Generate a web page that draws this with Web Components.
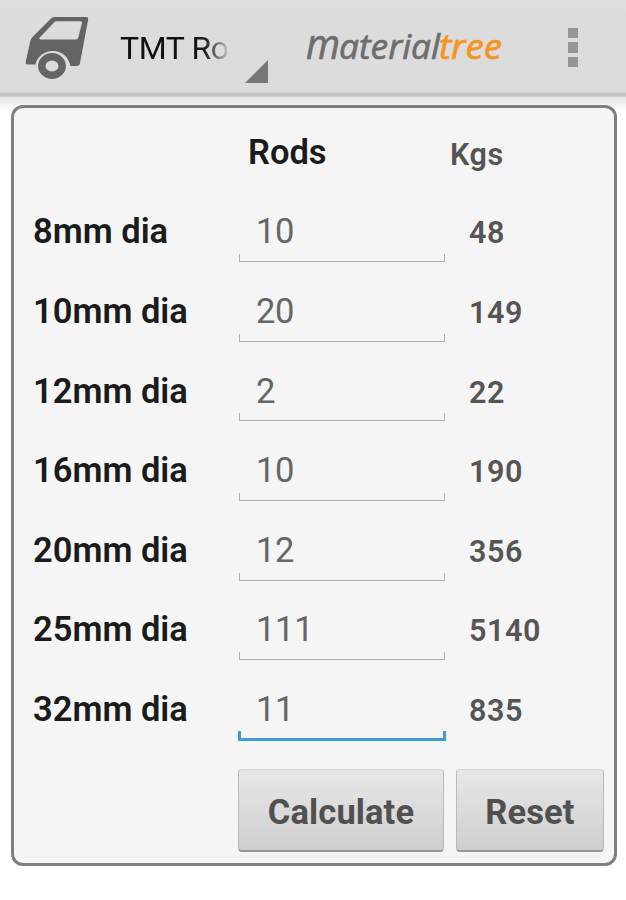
<!DOCTYPE html>
<html lang="en">
<head>
<meta charset="utf-8">
<title>TMT Rods</title>
<style>
    body {
        margin: 0;
        background: #fff;
        font-family: Roboto, sans-serif;
    }
</style>
</head>
<body>
<rod-app>
    <action-bar slot="bar">
        <truck-icon slot="icon"></truck-icon>
        <bar-spinner slot="title">TMT Ro</bar-spinner>
        <brand-logo slot="brand"></brand-logo>
    </action-bar>
    <rod-card></rod-card>
</rod-app>

<script>
const rods = [
    { size: '8mm dia', count: '10', weight: '48' },
    { size: '10mm dia', count: '20', weight: '149' },
    { size: '12mm dia', count: '2', weight: '22' },
    { size: '16mm dia', count: '10', weight: '190' },
    { size: '20mm dia', count: '12', weight: '356' },
    { size: '25mm dia', count: '111', weight: '5140' },
    { size: '32mm dia', count: '11', weight: '835', active: true }
]

/** Base element, renders its static template into an open shadow root */
class BaseElement extends HTMLElement {
    connectedCallback() {
        if (this.shadowRoot) return
        this.attachShadow({ mode: 'open' }).innerHTML = this.template()
    }
}

class RodApp extends BaseElement {
    template() {
        return `
        <style>
            :host {
                display: flex;
                flex-direction: column;
                height: 900px;
                overflow: hidden;
            }
            main {
                padding: 8px 9px 0 11px;
                background: linear-gradient(#e4e4e4, #fff 14px);
            }
        </style>
        <slot name="bar"></slot>
        <main><slot></slot></main>
        `
    }
}

class ActionBar extends BaseElement {
    template() {
        return `
        <style>
            :host {
                display: flex;
                align-items: center;
                box-sizing: border-box;
                height: 97px;
                padding: 0 48px 3px 24px;
                background: linear-gradient(#e1e1e1, #dcdcdc 12px, #dcdcdc 91px, #bdbdbd 95px, #d8d8d8);
            }
            .brand { margin-left: 37px; }
            .menu {
                display: grid;
                gap: 4px;
                margin: 1px 0 0 auto;
            }
            .menu i {
                width: 10.5px;
                height: 10.5px;
                background: #969696;
            }
        </style>
        <slot name="icon"></slot>
        <slot name="title"></slot>
        <div class="brand"><slot name="brand"></slot></div>
        <div class="menu"><i></i><i></i><i></i></div>
        `
    }
}

class TruckIcon extends BaseElement {
    template() {
        return `
        <style>
            :host { display: block; width: 66px; height: 66px; }
            svg { display: block; }
        </style>
        <svg width="66" height="66" viewBox="24 14.5 66 66">
            <path fill="#646464" fill-rule="evenodd" d="M54 17.5H86.5Q88.6 17.5 88.2 20L80 63.5Q79.6 66.5 76.5 66.5H70.5C68.5 57 61.5 51.5 53 51.5C44 51.5 37.5 57 35.3 65H27.5Q25.3 65 25.7 62.5L30.3 41.5Q30.7 39.5 32 38L51 19Q52.5 17.5 54 17.5ZM56.5 21.8Q55.2 21.8 54.3 22.7L39.5 38.3Q38.5 40 40.5 40H76Q77.8 40 78.2 38.3L82 23.5Q82.3 21.8 80.5 21.8Z"/>
            <ellipse cx="52" cy="66.5" rx="10.2" ry="9.3" fill="none" stroke="#646464" stroke-width="7.4"/>
        </svg>
        `
    }
}

class BarSpinner extends BaseElement {
    template() {
        return `
        <style>
            :host {
                display: flex;
                align-items: flex-end;
                justify-content: space-between;
                width: 148px;
                height: 64px;
                margin-left: 30px;
            }
            span {
                align-self: center;
                width: 107px;
                padding-top: 2px;
                white-space: nowrap;
                font-size: 32px;
                line-height: 40px;
                letter-spacing: -0.4px;
                color: transparent;
                background: linear-gradient(to right, #111 74px, #222 86px, rgba(50, 50, 50, 0.18) 107px);
                -webkit-background-clip: text;
                background-clip: text;
            }
            i {
                width: 23px;
                height: 23px;
                margin-bottom: -4px;
                background: #777;
                clip-path: polygon(100% 0, 100% 100%, 0 100%);
            }
        </style>
        <span><slot></slot></span><i></i>
        `
    }
}

class BrandLogo extends BaseElement {
    template() {
        return `
        <style>
            :host { display: block; }
            svg { display: block; font: italic 500 35px "Open Sans", sans-serif; }
            text { stroke-width: 0.7px; }
            .grey { fill: #6e6e6e; stroke: #6e6e6e; }
            .orange { fill: #f7931e; stroke: #f7931e; }
        </style>
        <svg width="202" height="70" viewBox="0 0 202 70">
            <text class="grey" x="1" y="47" textLength="34" lengthAdjust="spacingAndGlyphs" font-size="42">m</text>
            <text class="grey" x="34" y="47" textLength="101" lengthAdjust="spacingAndGlyphs">aterial</text>
            <text class="orange" x="134" y="47" textLength="63" lengthAdjust="spacingAndGlyphs">tree</text>
        </svg>
        `
    }
}

class RodField extends BaseElement {
    template() {
        return `
        <style>
            :host {
                display: block;
                position: relative;
                box-sizing: border-box;
                width: 206px;
                height: 62.5px;
                padding: 11.7px 0 0 17px;
                font-size: 34.5px;
                font-weight: 400;
                line-height: 40px;
                letter-spacing: -0.3px;
                color: #666;
            }
            :host::after {
                content: "";
                position: absolute;
                inset: auto 0 0 0;
                height: 7px;
                border: 1.6px solid #b0b0b0;
                border-top: 0;
            }
            :host([active])::after {
                inset: auto -1px -1px -1px;
                border: 3px solid #3b9fd3;
                border-top: 0;
            }
        </style>
        <slot></slot>
        `
    }
}

class HoloButton extends BaseElement {
    template() {
        return `
        <style>
            :host { display: block; }
            button {
                display: block;
                width: 100%;
                height: 83px;
                padding: 4px 0 0;
                border: 1px solid #b9b9b9;
                border-top-color: #d4d4d4;
                border-bottom: 2px solid #979797;
                border-radius: 4px;
                background: linear-gradient(#e8e8e8, #cecece);
                font: 700 34.5px Roboto, sans-serif;
                letter-spacing: 0.1px;
                color: #505050;
            }
        </style>
        <button><slot></slot></button>
        `
    }
}

class RodCard extends BaseElement {
    template() {
        return `
        <style>
            :host {
                display: block;
                box-sizing: border-box;
                height: 761px;
                border: 3px solid #7f7f7f;
                border-radius: 12px;
                background: #f5f5f5;
            }
            .row {
                display: grid;
                grid-template-columns: 206px 230px 1fr;
                height: 79.67px;
                padding-left: 19px;
                line-height: 40px;
                font-weight: 600;
            }
            .head { height: 91.5px; }
            .size {
                padding-top: 11.7px;
                font-size: 34.5px;
                color: #1b1b1b;
            }
            .head .size { padding: 23.5px 0 0 9px; }
            .weight {
                padding-top: 13.7px;
                font-size: 30.5px;
                letter-spacing: 0.6px;
                color: #555;
            }
            .head .weight { padding-top: 26.5px; margin-left: -19px; }
            .buttons {
                display: flex;
                gap: 12px;
                padding: 11.5px 0 0 224px;
            }
            .calculate { width: 206px; }
            .reset { width: 148px; }
        </style>
        <div class="row head">
            <span></span><span class="size">Rods</span><span class="weight">Kgs</span>
        </div>
        ${rods.map(rod => `
        <div class="row">
            <span class="size">${rod.size}</span>
            <rod-field ${rod.active ? 'active' : ''}>${rod.count}</rod-field>
            <span class="weight">${rod.weight}</span>
        </div>`).join('')}
        <div class="buttons">
            <holo-button class="calculate">Calculate</holo-button>
            <holo-button class="reset">Reset</holo-button>
        </div>
        `
    }
}

customElements.define('rod-app', RodApp)
customElements.define('action-bar', ActionBar)
customElements.define('truck-icon', TruckIcon)
customElements.define('bar-spinner', BarSpinner)
customElements.define('brand-logo', BrandLogo)
customElements.define('rod-field', RodField)
customElements.define('holo-button', HoloButton)
customElements.define('rod-card', RodCard)
</script>
</body>
</html>
